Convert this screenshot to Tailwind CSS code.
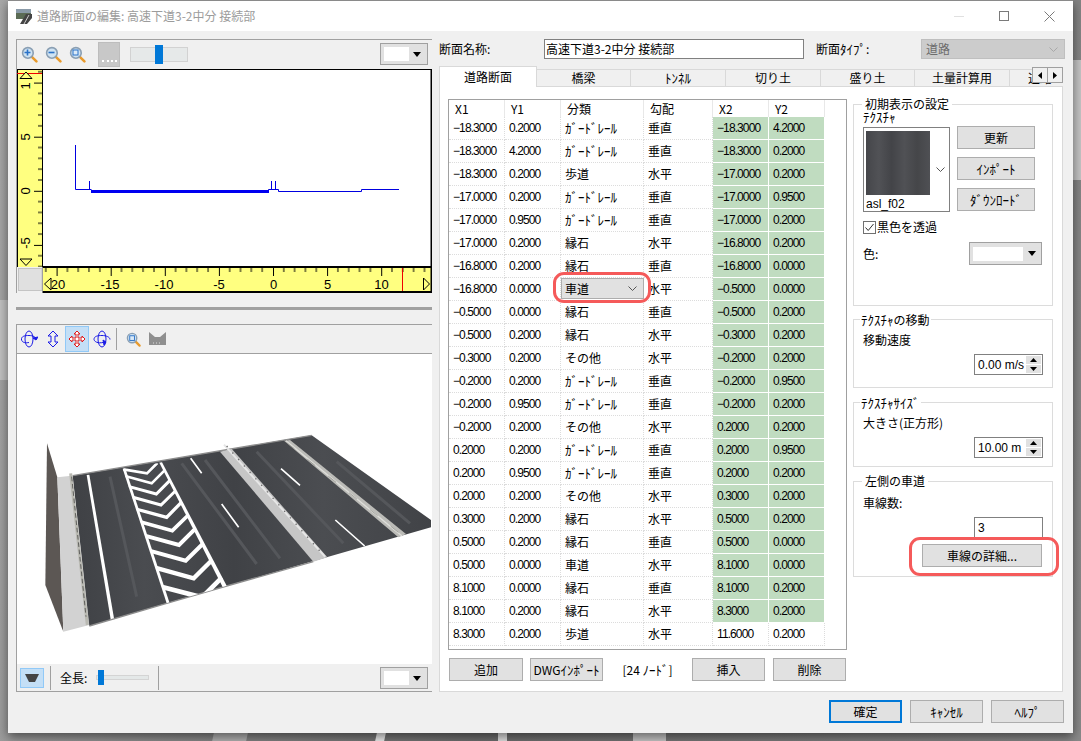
<!DOCTYPE html>
<html lang="ja">
<head>
<meta charset="UTF-8">
<title>道路断面の編集</title>
<script src="https://cdn.jsdelivr.net/npm/@tailwindcss/browser@4"></script>
</head>
<body class="relative w-[1081px] h-[741px] overflow-hidden bg-[linear-gradient(100deg,#a8a8a8,#6f6f6f_50%,#8a8a8a)] font-['Noto_Sans_CJK_JP',sans-serif] text-[12px] leading-[14px] text-black">

<svg width="0" height="0" class="absolute">
  <defs>
    <symbol id="lens" viewBox="0 0 16 16">
      <path d="M9.5 9.5L14.5 14.5" stroke="#e89a2c" stroke-width="2.4" stroke-linecap="round"/>
      <circle cx="6.5" cy="6.5" r="5" fill="#cfe3f3" stroke="#8a9fb3" stroke-width="1.5"/>
    </symbol>
    <pattern id="tickx" x="2.5" y="267" width="54.1" height="12" patternUnits="userSpaceOnUse">
      <path d="M0.5 0v9M10.8 0v5M21.6 0v5M32.4 0v5M43.3 0v5" stroke="#000" stroke-width="1" fill="none"/>
    </pattern>
    <pattern id="ticky" x="32" y="28.5" width="10" height="54.1" patternUnits="userSpaceOnUse">
      <path d="M10 0.5h-8M10 10.8h-4M10 21.6h-4M10 32.4h-4M10 43.3h-4" stroke="#000" stroke-width="1" fill="none"/>
    </pattern>
    <linearGradient id="asphalt" x1="0" y1="0" x2="1" y2="0">
      <stop offset="0" stop-color="#3f4145"/><stop offset=".2" stop-color="#4a4c50"/><stop offset=".45" stop-color="#404246"/><stop offset=".7" stop-color="#4b4d51"/><stop offset="1" stop-color="#414347"/>
    </linearGradient>
    <clipPath id="zone"><polygon points="368,476 480,458 680,828 503,878"/></clipPath>
  </defs>
</svg>

<!-- blurred road behind the dialog -->
<div class="absolute left-[213px] top-[733px] w-[34px] h-[8px] bg-[#b4b4b4] -skew-x-12"></div>
<div class="absolute left-[376px] top-[733px] w-[9px] h-[8px] bg-[#f0f0f0] -skew-x-12"></div>
<div class="absolute left-[498px] top-[733px] w-[9px] h-[8px] bg-[#e4e4e4]"></div>
<div class="absolute left-[633px] top-[733px] w-[33px] h-[8px] bg-[#c8c8c8]"></div>
<div class="absolute left-[1073px] top-[60px] w-[8px] h-[120px] bg-[#c4c4c4]"></div>
<div class="absolute left-[0px] top-[300px] w-[8px] h-[80px] bg-[#c0c0c0]"></div>

<!-- dialog -->
<div class="relative ml-[8px] w-[1065px] h-[733px] flex flex-col bg-[#f0f0f0] border-t border-[#8a8a8a] shadow-[0_4px_10px_rgba(0,0,0,0.5)]">

  <div class="h-[30px] shrink-0 bg-white flex items-center pl-[8px]">
    <svg width="17" height="17" viewBox="0 0 17 17" class="mr-[4px]">
      <rect x="0" y="1" width="15" height="10" fill="#5b6b55"/>
      <rect x="0" y="1" width="15" height="4" fill="#8a9aa8"/>
      <path d="M4 16L10 6h6v4l-5 6z" fill="#444"/>
      <path d="M8 16L13 7" stroke="#ccc" stroke-width="1"/>
    </svg>
    <span class="text-[#9c9c9c]">道路断面の編集: 高速下道3-2中分 接続部</span>
    <div class="ml-auto flex items-center">
      <div class="w-[10px] h-px bg-[#e0e0e0] mr-[35px]"></div>
      <div class="w-[10px] h-[10px] border border-[#7a7a7a] mr-[35px]"></div>
      <svg width="11" height="11" viewBox="0 0 11 11" class="mr-[18px]"><path d="M0.5 0.5L10.5 10.5M10.5 0.5L0.5 10.5" stroke="#7a7a7a" stroke-width="1"/></svg>
    </div>
  </div>

  <div class="flex pl-[8px] pt-[8px]">
    <!-- left column -->
    <div class="w-[416px] shrink-0 flex flex-col">
      <div class="h-[254px] border-t border-l border-[#a0a0a0]">
        <div class="h-[29px] flex items-center relative">
          <svg width="17" height="17" class="ml-[4px]"><use href="#lens"/><path d="M3.5 6.5h6M6.5 3.5v6" stroke="#2a72c8" stroke-width="1.6"/></svg>
          <svg width="17" height="17" class="ml-[7px]"><use href="#lens"/><path d="M3.5 6.5h6" stroke="#2a72c8" stroke-width="1.6"/></svg>
          <svg width="17" height="17" class="ml-[7px]"><use href="#lens"/><rect x="4" y="4" width="5" height="5" fill="#dbeaf7" stroke="#2a72c8" stroke-width="1"/></svg>
          <div class="ml-[12px] w-[22px] h-[25px] bg-[#c8c8c8] border border-[#bdbdbd] flex items-end justify-center pb-[4px]"><div class="w-[15px] border-b-2 border-dotted border-white"></div></div>
          <div class="ml-[10px] w-[58px] h-[15px] bg-[#e6e9e9] border border-[#d2d2d2] relative"><div class="absolute left-[24px] -top-[3px] w-[8px] h-[19px] bg-[#0078d7]"></div></div>
          <div class="absolute left-[363px] top-[3px] w-[48px] h-[22px] bg-[#e1e1e1] border border-[#a0a0a0] flex items-center pl-[3px]">
            <div class="w-[25px] h-[14px] bg-white"></div>
            <svg width="8" height="5" class="ml-[4px]"><path d="M0 0h8L4 5z" fill="#000"/></svg>
          </div>
        </div>
        <svg width="415" height="224" viewBox="17 69 415 224" class="block">
          <rect x="17" y="69" width="415" height="224" fill="#000"/>
          <rect x="18" y="70" width="24" height="197" fill="#ffff80"/>
          <rect x="43" y="70" width="387.5" height="196" fill="#fff"/>
          <rect x="43" y="268" width="387.5" height="23" fill="#ffff80"/>
          <rect x="17" y="267" width="25.5" height="26" fill="#f0f0f0"/>
          <rect x="18.5" y="268.5" width="23.5" height="22" fill="#e0e0e0" stroke="#c4c4c4"/>
          <rect x="32" y="70" width="10" height="197" fill="url(#ticky)"/>
          <rect x="43" y="268" width="387" height="10" fill="url(#tickx)"/>
          <path d="M17 73.5h25M402.5 268v23" stroke="#f00000" stroke-width="1" fill="none"/>
          <polygon points="20,78.5 32,78.5 26,72" fill="#ffff80" stroke="#000"/>
          <polygon points="20,259 32,259 26,265.5" fill="#ffff80" stroke="#000"/>
          <g font-family="Liberation Sans" font-size="13" text-anchor="middle" fill="#000">
            <text x="58" y="288.5">20</text><text x="110" y="288.5">-15</text><text x="164" y="288.5">-10</text><text x="219" y="288.5">-5</text>
            <text x="273.5" y="288.5">0</text><text x="327.5" y="288.5">5</text><text x="381.5" y="288.5">10</text>
            <text transform="translate(30,86) rotate(-90)">1</text><text transform="translate(30,137) rotate(-90)">5</text>
            <text transform="translate(30,191) rotate(-90)">0</text><text transform="translate(30,243) rotate(-90)">-5</text>
          </g>
          <polygon points="44.5,284 51,278 51,290" fill="#ffff80" stroke="#000"/>
          <polygon points="423.5,278 429.5,284 423.5,290" fill="#ffff80" stroke="#000"/>
          <path d="M75.5 145V189.5H91.5M89.5 181V189.5M268.5 191V189.5H278.5V191.5H361.5V189.5H399M271.5 181V189.5M275.5 181V189.5" stroke="#0000e0" stroke-width="1" fill="none"/>
          <path d="M91 191.5H269" stroke="#0000f0" stroke-width="3"/>
        </svg>
      </div>
      <div class="h-[3px] mt-[14px] bg-[#a0a0a0]"></div>
      <div class="h-[368px] mt-[14px] border-t border-l border-[#a0a0a0] border-b flex flex-col">
        <div class="h-[29px] shrink-0 flex items-center border-b border-[#a0a0a0] pl-[2px]">
          <svg width="18" height="18" viewBox="0 0 18 18" fill="none" stroke="#1a1ae6" class="ml-[1px]"><ellipse cx="9" cy="9" rx="4" ry="8"/><path d="M1.500 10C1 6 5 5.500 9 5.500S16 7 16 9.500" /><path d="M1.500 9.500C2 13 6 13 9 12.500" /><path d="M13 8l3 2 2-3z" fill="#1a1ae6"/></svg>
          <svg width="16" height="18" viewBox="0 0 16 18" fill="none" stroke="#1a1ae6" class="ml-[7px]"><path d="M8 1l5 5h-3v6h3l-5 5-5-5h3V6H3z"/></svg>
          <div class="ml-[4px] w-[24px] h-[26px] bg-[#c4dff6] border border-[#91c9f7] flex items-center justify-center">
            <svg width="18" height="18" viewBox="0 0 18 18" fill="#fff" stroke="#e01818"><path d="M9 1l3 3h-2v4h4V6l3 3-3 3v-2h-4v4h2l-3 3-3-3h2v-4H4v2L1 9l3-3v2h4V4H6z"/></svg>
          </div>
          <svg width="18" height="18" viewBox="0 0 18 18" fill="none" stroke="#1a1ae6" class="ml-[4px]"><ellipse cx="9" cy="9" rx="4" ry="8"/><path d="M1 9.500C1 6 5 5.500 9 5.500S17 7 17 9.500" /><path d="M1 9.500C2 13 7 13.500 12 12" /><path d="M10 10l3 2-2 3z" fill="#1a1ae6"/></svg>
          <div class="ml-[5px] w-px h-[22px] bg-[#a0a0a0]"></div>
          <svg width="15" height="15" viewBox="0 0 16 16" class="ml-[9px]"><use href="#lens"/><rect x="4" y="4" width="5" height="5" fill="#dbeaf7" stroke="#2a72c8" stroke-width="1"/></svg>
          <svg width="17" height="14" viewBox="0 0 17 14" class="ml-[8px]"><path d="M0 0l6 5h5l6-5v13H0z" fill="#8f8f8f"/><path d="M4 11h9" stroke="#ddd" stroke-dasharray="1 2"/></svg>
        </div>
        <svg width="415" height="310" viewBox="51 132 1245 930" class="block bg-white shrink-0">
          <polygon points="141,400 172,502 190,965 136,825" fill="#5c5754"/>
          <polygon points="172,502 215,497 268,945 190,965" fill="#d2d2d2"/>
          <polygon points="218,497 935,376 1293,630 1293,652 980,742 680,828 500,880 268,948" fill="url(#asphalt)"/>
          <path d="M218 497L935 376M268 948L500 880L680 828L940 755" stroke="#8d8d8d" stroke-width="4" fill="none"/>
          <path d="M330 500L410 860M545 460L770 762M615 450L840 745M770 425L1030 700M1010 455L1230 640" stroke="#55575b" stroke-width="9" fill="none"/>
          <path d="M212 490L262 945" stroke="#b9b9b2" stroke-width="9"/>
          <path d="M215 500L258 920" stroke="#333" stroke-width="2" stroke-dasharray="14 8"/>
          <polygon points="260,495 268,494 342,925 332,928" fill="#fff"/>
          <g clip-path="url(#zone)">
            <g fill="none" stroke="#fff">
              <polyline stroke-width="8" points="370,478 441,490 472,459"/>
              <polyline stroke-width="8" points="375,498 455,520 493,482"/>
              <polyline stroke-width="9" points="385,529 469,552 509,512"/>
              <polyline stroke-width="9" points="396,561 483,585 526,543"/>
              <polyline stroke-width="10" points="407,597 500,622 544,577"/>
              <polyline stroke-width="11" points="420,635 517,662 565,615"/>
              <polyline stroke-width="12" points="434,677 537,705 587,655"/>
              <polyline stroke-width="12" points="448,722 557,752 611,699"/>
              <polyline stroke-width="13" points="465,773 581,805 637,749"/>
              <polyline stroke-width="14" points="484,830 606,862 666,802"/>
            </g>
          </g>
          <polygon points="368,476 376,475 508,877 500,880" fill="#fff"/>
          <polygon points="478,458 486,457 680,827 668,831" fill="#fff"/>
          <path d="M572 445L605 490M665 582L716 652M843 476L900 526M1006 630L1094 708" stroke="#fff" stroke-width="5"/>
          <polygon points="852,392 870,390 1218,672 1195,682" fill="#bcbcb8"/>
          <path d="M858 392L1206 678" stroke="#dededa" stroke-width="4"/>
          <polygon points="660,425 695,416 982,742 940,755" fill="#c6c6c6"/>
          <path d="M672 404L975 740" stroke="#e6e6e6" stroke-width="6"/>
          <path d="M680 408L970 735" stroke="#6e6e6e" stroke-width="4" stroke-dasharray="4 22"/>
          <path d="M860 398L1205 675" stroke="#8a8a84" stroke-width="2" stroke-dasharray="30 50"/>
        </svg>
        <div class="flex-1 flex items-center relative pl-[3px]">
          <div class="w-[24px] h-[20px] bg-[#c4dff6] border border-[#91c9f7] flex items-center justify-center">
            <svg width="14" height="8" viewBox="0 0 14 8"><path d="M0 0h14l-4 8H4z" fill="#444"/></svg>
          </div>
          <div class="ml-[6px] w-px h-[24px] bg-[#a0a0a0]"></div>
          <span class="ml-[9px]">全長:</span>
          <div class="ml-[9px] w-[53px] h-[5px] bg-[#e4e8e8] border border-[#d4d4d4] relative"><div class="absolute left-[1px] -top-[6px] w-[6px] h-[15px] bg-[#0078d7]"></div></div>
          <div class="ml-[9px] w-px h-[24px] bg-[#a0a0a0]"></div>
          <div class="absolute left-[363px] top-[3px] w-[48px] h-[22px] bg-[#e1e1e1] border border-[#a0a0a0] flex items-center pl-[3px]">
            <div class="w-[25px] h-[14px] bg-white"></div>
            <svg width="8" height="5" class="ml-[4px]"><path d="M0 0h8L4 5z" fill="#000"/></svg>
          </div>
        </div>
      </div>
    </div>

    <!-- right column -->
    <div class="ml-[7px] w-[626px] flex flex-col">
      <div class="h-[20px] flex items-center">
        <span class="w-[105px]">断面名称:</span>
        <div class="w-[260px] h-[20px] bg-white border border-[#808080] pl-[1px] flex items-center">高速下道3-2中分 接続部</div>
        <span class="ml-[12px] w-[105px]">断面<span class="text-[13px]">ﾀｲﾌﾟ</span>:</span>
        <div class="w-[144px] h-[20px] bg-[#cccccc] border border-[#bfbfbf] flex items-center pl-[4px] text-[#6d6d6d]">
          道路
          <svg width="9" height="5" class="ml-auto mr-[6px]"><path d="M0.5 0.5L4.5 4.5L8.5 0.5" stroke="#a8a8a8" fill="none"/></svg>
        </div>
      </div>

      <div class="mt-[7px] relative h-[21px] w-[624px] flex items-end overflow-hidden">
        <div class="w-[98px] h-[21px] bg-white border border-b-0 border-[#d9d9d9] flex items-center justify-center relative z-10">道路断面</div>
        <div class="w-[94px] h-[18px] bg-[#f0f0f0] border-t border-r border-b border-[#d9d9d9] flex items-center justify-center">橋梁</div>
        <div class="w-[95px] h-[18px] bg-[#f0f0f0] border-t border-r border-b border-[#d9d9d9] flex items-center justify-center text-[13px]">ﾄﾝﾈﾙ</div>
        <div class="w-[95px] h-[18px] bg-[#f0f0f0] border-t border-r border-b border-[#d9d9d9] flex items-center justify-center">切り土</div>
        <div class="w-[94px] h-[18px] bg-[#f0f0f0] border-t border-r border-b border-[#d9d9d9] flex items-center justify-center">盛り土</div>
        <div class="w-[95px] h-[18px] bg-[#f0f0f0] border-t border-r border-b border-[#d9d9d9] flex items-center justify-center">土量計算用</div>
        <div class="w-[53px] h-[18px] shrink-0 bg-[#f0f0f0] border-t border-b border-[#d9d9d9] pl-[18px] flex items-center overflow-hidden">道路</div>
        <div class="absolute left-[593px] top-[1px] w-[16px] h-[16px] bg-[#f0f0f0] border border-[#a0a0a0] flex items-center justify-center"><svg width="4" height="7"><path d="M4 0v7L0 3.5z" fill="#000"/></svg></div>
        <div class="absolute left-[608px] top-[1px] w-[16px] h-[16px] bg-[#f0f0f0] border border-[#a0a0a0] flex items-center justify-center"><svg width="4" height="7"><path d="M0 0v7l4-3.500z" fill="#000"/></svg></div>
      </div>

      <div class="w-[624px] h-[605px] bg-white border border-t-0 border-[#d9d9d9] flex pl-[8px] pt-[12px]">
        <div class="w-[399px] shrink-0">
          <div class="h-[551px] border border-[#a0a0a0] bg-white">
            <div id="tbl" class="grid grid-cols-[56px_56px_83px_69px_56px_56px] grid-rows-[17px] auto-rows-[23px] w-[376px]"></div>
          </div>
          <div class="mt-[8px] flex items-center">
            <button class="w-[74px] h-[23px] bg-[#e1e1e1] border border-[#adadad] ml-px">追加</button>
            <button class="w-[73px] h-[23px] bg-[#e1e1e1] border border-[#adadad] ml-[7px] whitespace-nowrap">DWG<span class="text-[13px]">ｲﾝﾎﾟｰﾄ</span></button>
            <span class="w-[89px] text-center">[24 <span class="text-[13px]">ﾉｰﾄﾞ</span>]</span>
            <button class="w-[73px] h-[23px] bg-[#e1e1e1] border border-[#adadad]">挿入</button>
            <button class="w-[73px] h-[23px] bg-[#e1e1e1] border border-[#adadad] ml-[8px]">削除</button>
          </div>
        </div>

        <div class="ml-[6px] w-[200px] pt-[5px] flex flex-col">
          <div class="relative h-[202px] border border-[#dcdcdc] pl-[9px] pt-[5px]">
            <span class="absolute left-[8px] -top-[8px] bg-white px-[3px]">初期表示の設定</span>
            <div class="h-[17px] text-[13px]">ﾃｸｽﾁｬ</div>
            <div class="flex">
              <div class="relative w-[87px] h-[85px] border border-[#808080] pl-[2px] pt-[3px]">
                <div class="w-[64px] h-[64px] bg-[linear-gradient(90deg,#45464a,#515256,#434448,#505155,#454649,#4f5054)]"></div>
                <span class="font-['Liberation_Sans',sans-serif] block mt-[2px]">asl_f02</span>
                <svg width="9" height="5" class="absolute right-[4px] top-[39px]"><path d="M0.500 0.500L4.500 4.500L8.500 0.500" stroke="#555" fill="none"/></svg>
              </div>
              <div class="ml-[7px] -mt-px flex flex-col gap-[8px]">
                <button class="w-[78px] h-[23px] bg-[#e1e1e1] border border-[#adadad]">更新</button>
                <button class="w-[78px] h-[23px] bg-[#e1e1e1] border border-[#adadad] text-[13px]">ｲﾝﾎﾟｰﾄ</button>
                <button class="w-[78px] h-[23px] bg-[#e1e1e1] border border-[#adadad] text-[13px]">ﾀﾞｳﾝﾛｰﾄﾞ</button>
              </div>
            </div>
            <div class="mt-[8px] flex items-center h-[14px]">
              <svg width="13" height="13" viewBox="0 0 13 13" class="mr-[1px]"><rect x="0.500" y="0.500" width="12" height="12" fill="#fff" stroke="#707070"/><path d="M2.500 6.500L5.200 9.500L10.500 3" stroke="#333" fill="none"/></svg>
              黒色を透過
            </div>
            <div class="mt-[8px] flex items-center h-[23px]">
              <span>色:</span>
              <div class="ml-auto mr-[10px] w-[73px] h-[23px] bg-[#e1e1e1] border border-[#a0a0a0] flex items-center pl-[3px]">
                <div class="w-[50px] h-[14px] bg-white"></div>
                <svg width="8" height="5" class="ml-[5px]"><path d="M0 0h8L4 5z" fill="#000"/></svg>
              </div>
            </div>
          </div>

          <div class="relative h-[69px] mt-[13px] border border-[#dcdcdc] pl-[9px] pt-[13px]">
            <span class="absolute left-[6px] -top-[7px] bg-white px-[1px]"><span class="text-[13px]">ﾃｸｽﾁｬ</span>の移動</span>
            <div class="h-[16px]">移動速度</div>
            <div class="mt-[5px] ml-[111px] w-[69px] h-[21px] border border-[#808080] bg-white flex items-center pl-[3px] font-['Liberation_Sans',sans-serif] whitespace-nowrap">
              0.00 m/s
              <div class="ml-auto mr-[1px] w-[15px] flex flex-col gap-px">
                <div class="h-[8px] bg-[#e1e1e1] flex items-center justify-center"><svg width="7" height="4"><path d="M3.500 0L7 4H0z" fill="#000"/></svg></div>
                <div class="h-[8px] bg-[#e1e1e1] flex items-center justify-center"><svg width="7" height="4"><path d="M0 0h7L3.500 4z" fill="#000"/></svg></div>
              </div>
            </div>
          </div>

          <div class="relative h-[65px] mt-[14px] border border-[#dcdcdc] pl-[9px] pt-[13px]">
            <span class="absolute left-[6px] -top-[7px] bg-white px-[1px] text-[13px]">ﾃｸｽﾁｬｻｲｽﾞ</span>
            <div class="h-[16px]">大きさ(正方形)</div>
            <div class="mt-[5px] ml-[111px] w-[69px] h-[21px] border border-[#808080] bg-white flex items-center pl-[3px] font-['Liberation_Sans',sans-serif] whitespace-nowrap">
              10.00 m
              <div class="ml-auto mr-[1px] w-[15px] flex flex-col gap-px">
                <div class="h-[8px] bg-[#e1e1e1] flex items-center justify-center"><svg width="7" height="4"><path d="M3.500 0L7 4H0z" fill="#000"/></svg></div>
                <div class="h-[8px] bg-[#e1e1e1] flex items-center justify-center"><svg width="7" height="4"><path d="M0 0h7L3.500 4z" fill="#000"/></svg></div>
              </div>
            </div>
          </div>

          <div class="relative h-[96px] mt-[14px] border border-[#dcdcdc] pl-[9px] pt-[14px]">
            <span class="absolute left-[8px] -top-[8px] bg-white px-[3px]">左側の車道</span>
            <div class="h-[16px]">車線数:</div>
            <div class="mt-[5px] ml-[111px] w-[69px] h-[22px] border border-[#808080] bg-white flex items-center pl-[3px] font-['Liberation_Sans',sans-serif]">3</div>
            <button class="absolute left-[68px] top-[62px] w-[120px] h-[23px] bg-[#e1e1e1] border border-[#adadad]">車線の詳細...</button>
            <div class="absolute left-[55px] top-[55px] w-[150px] h-[39px] border-[3px] border-[#f55a5a] rounded-[11px]"></div>
          </div>
        </div>
      </div>
    </div>
  </div>

  <div class="flex justify-end gap-[8px] pt-[8px] pr-[9px]">
    <button class="w-[73px] h-[23px] bg-[#e1e1e1] border-2 border-[#0078d7]">確定</button>
    <button class="w-[73px] h-[23px] bg-[#e1e1e1] border border-[#adadad] text-[13px]">ｷｬﾝｾﾙ</button>
    <button class="w-[73px] h-[23px] bg-[#e1e1e1] border border-[#adadad] text-[13px]">ﾍﾙﾌﾟ</button>
  </div>
</div>

<script>
  const G = '<span class="text-[13px]">ｶﾞｰﾄﾞﾚｰﾙ</span>'
  const rows = [
    ['−18.3000','0.2000',G,'垂直','−18.3000','4.2000'],
    ['−18.3000','4.2000',G,'垂直','−18.3000','0.2000'],
    ['−18.3000','0.2000','歩道','水平','−17.0000','0.2000'],
    ['−17.0000','0.2000',G,'垂直','−17.0000','0.9500'],
    ['−17.0000','0.9500',G,'垂直','−17.0000','0.2000'],
    ['−17.0000','0.2000','縁石','水平','−16.8000','0.2000'],
    ['−16.8000','0.2000','縁石','垂直','−16.8000','0.0000'],
    ['−16.8000','0.0000','車道','水平','−0.5000','0.0000'],
    ['−0.5000','0.0000','縁石','垂直','−0.5000','0.2000'],
    ['−0.5000','0.2000','縁石','水平','−0.3000','0.2000'],
    ['−0.3000','0.2000','その他','水平','−0.2000','0.2000'],
    ['−0.2000','0.2000',G,'垂直','−0.2000','0.9500'],
    ['−0.2000','0.9500',G,'垂直','−0.2000','0.2000'],
    ['−0.2000','0.2000','その他','水平','0.2000','0.2000'],
    ['0.2000','0.2000',G,'垂直','0.2000','0.9500'],
    ['0.2000','0.9500',G,'垂直','0.2000','0.2000'],
    ['0.2000','0.2000','その他','水平','0.3000','0.2000'],
    ['0.3000','0.2000','縁石','水平','0.5000','0.2000'],
    ['0.5000','0.2000','縁石','垂直','0.5000','0.0000'],
    ['0.5000','0.0000','車道','水平','8.1000','0.0000'],
    ['8.1000','0.0000','縁石','垂直','8.1000','0.2000'],
    ['8.1000','0.2000','縁石','水平','8.3000','0.2000'],
    ['8.3000','0.2000','歩道','水平','11.6000','0.2000'],
  ]
  const head = 'flex items-center pl-[6px] border-r border-[#e8e8e8]'
  const num = "flex items-center pl-[4px] border-r border-b border-dotted border-[#dcdcdc] font-['Liberation_Sans',sans-serif] text-[12px] tracking-[-0.9px]"
  const txt = 'flex items-center pl-[4px] border-r border-b border-dotted border-[#dcdcdc] relative'
  const green = "flex items-center pl-[4px] border-r border-b border-white bg-[#c0dcc0] font-['Liberation_Sans',sans-serif] text-[12px] tracking-[-0.9px]"
  const tbl = document.getElementById('tbl')
  let html = ''
  ;['X1','Y1','分類','勾配','X2','Y2'].forEach(h => { html += '<div class="' + head + '">' + h + '</div>' })
  rows.forEach((r, i) => {
    const isLast = i === rows.length - 1
    r.forEach((v, c) => {
      if (i === 7 && c === 2) {
        // the open combo in the 分類 column, ringed in red
        html += '<div class="' + txt + '"><div class="absolute left-[0px] top-[0px] w-[83px] h-[21px] bg-[#e1e1e1] border border-[#adadad] pl-[3px] flex items-center">' + v +
          '<svg width="9" height="5" class="ml-auto mr-[6px]"><path d="M0.500 0.500L4.500 4.500L8.500 0.500" stroke="#555" fill="none"/></svg></div>' +
          '<div class="absolute -left-[8px] -top-[6px] w-[98px] h-[31px] border-[3px] border-[#f55a5a] rounded-[11px] z-10"></div></div>'
      } else if (c === 2 || c === 3) {
        html += '<div class="' + txt + '">' + v + '</div>'
      } else if (c >= 4 && !isLast) {
        html += '<div class="' + green + '">' + v + '</div>'
      } else {
        html += '<div class="' + num + '">' + v + '</div>'
      }
    })
  })
  tbl.innerHTML = html
</script>
</body>
</html>
